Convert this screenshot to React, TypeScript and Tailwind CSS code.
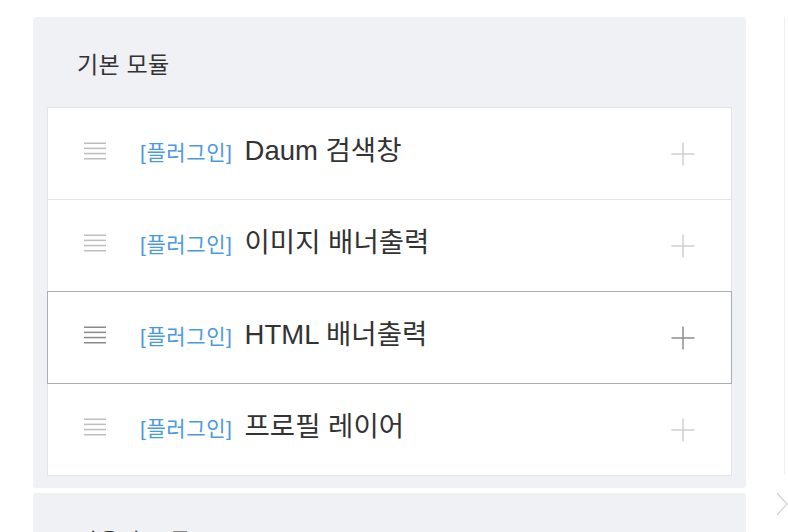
import React from "react";

const modules = [
  { name: "Daum 검색창", active: false },
  { name: "이미지 배너출력", active: false },
  { name: "HTML 배너출력", active: true },
  { name: "프로필 레이어", active: false },
];

function DragHandle({ dark }: { dark: boolean }) {
  return (
    <svg width="22" height="18" viewBox="0 0 22 18" className={dark ? "text-[#8a8a8a]" : "text-[#bdbdbd]"}>
      <rect x="0" y="0.5" width="22" height="1.5" fill="currentColor" />
      <rect x="0" y="5.6" width="22" height="1.5" fill="currentColor" />
      <rect x="0" y="10.8" width="22" height="1.5" fill="currentColor" />
      <rect x="0" y="16" width="22" height="1.5" fill="currentColor" />
    </svg>
  );
}

function Plus({ dark }: { dark: boolean }) {
  return (
    <svg width="24" height="24" viewBox="0 0 24 24" fill="none" stroke="currentColor" strokeWidth="1.5" className={dark ? "text-[#8f8f8f]" : "text-[#cfcfcf]"}>
      <path d="M12 0.5v23M0.5 12h23" />
    </svg>
  );
}

function ModuleRow({ name, active }: { name: string; active: boolean }) {
  return (
    <div
      className={
        "relative -mt-px first:mt-0 h-[93px] flex items-center bg-white border pl-[36px] pr-[36px] " +
        (active ? "z-10 border-[#a9adb7]" : "border-[#e2e4ea]")
      }
    >
      <div className="-mt-[5px]">
        <DragHandle dark={active} />
      </div>
      <div className="ml-[34px] flex items-baseline -mt-[5px]">
        <span className="text-[21px] tracking-[0.6px] text-[#4a9ae0]">[플러그인]</span>
        <span className="ml-[12px] text-[27.5px] text-[#333]">{name}</span>
      </div>
      <div className="ml-auto">
        <Plus dark={active} />
      </div>
    </div>
  );
}

export default function App() {
  return (
    <div
      className="w-[788px] h-[532px] overflow-hidden bg-white flex pt-[17px] pl-[33px]"
      style={{ fontFamily: '"Liberation Sans", "Noto Sans CJK KR", sans-serif' }}
    >
      <div className="w-[713px] shrink-0 flex flex-col gap-[5px]">
        <section className="bg-[#f0f1f5] rounded-[3px] px-[14px] pb-[12px]">
          <div className="h-[90px] pt-[6px] flex items-center pl-[30px] text-[23px] tracking-[0.3px] text-[#333]">기본 모듈</div>
          <div className="flex flex-col">
            {modules.map((m) => (
              <ModuleRow key={m.name} name={m.name} active={m.active} />
            ))}
          </div>
        </section>
        <section className="bg-[#f0f1f5] rounded-[3px] px-[14px] h-[120px]">
          <div className="h-[90px] pt-[8px] flex items-center pl-[30px] text-[23px] tracking-[0.3px] text-[#333]">사용자 모듈</div>
        </section>
      </div>
      <div className="ml-[30px] flex flex-col shrink-0 w-[40px]">
        <div className="ml-[8px] h-[458px] border-l border-[#eceef2]" />
        <div className="mt-[17px]">
          <svg width="12" height="24" viewBox="0 0 12 24" fill="none" stroke="#d2d2d2" strokeWidth="1.2">
            <path d="M1 1l10 11L1 23" />
          </svg>
        </div>
      </div>
    </div>
  );
}
